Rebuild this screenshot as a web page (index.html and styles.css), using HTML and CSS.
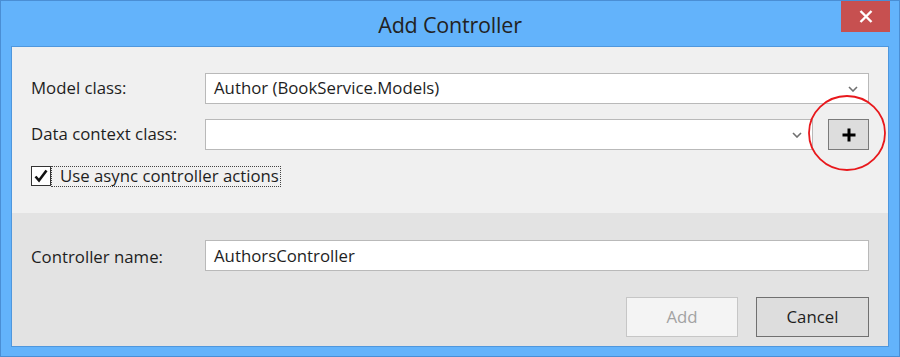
FILE: index.html
```html
<!DOCTYPE html>
<html>
<head>
<meta charset="utf-8">
<link rel="stylesheet" href="styles.css">
</head>
<body>
<div class="window">
  <div class="titlebar">
    <div></div>
    <div class="title">Add Controller</div>
    <div class="tb-right">
      <div class="close">
        <svg width="14" height="13" viewBox="0 0 14 13"><path d="M1.5 1 L12.5 12 M12.5 1 L1.5 12" stroke="#fff" stroke-width="2.4" fill="none"/></svg>
      </div>
    </div>
  </div>
  <div class="panel">
    <div class="upper">
      <div class="label">Model class:</div>
      <div class="combo">
        <span class="combo-text">Author (BookService.Models)</span>
        <svg class="chev" width="10" height="6" viewBox="0 0 10 6"><path d="M1 1 L5 5 L9 1" stroke="#707070" stroke-width="1.6" fill="none"/></svg>
      </div>
      <div class="label">Data context class:</div>
      <div class="row2">
        <div class="combo combo-grow">
          <span class="combo-text"></span>
          <svg class="chev" width="10" height="6" viewBox="0 0 10 6"><path d="M1 1 L5 5 L9 1" stroke="#707070" stroke-width="1.6" fill="none"/></svg>
        </div>
        <div class="plus-wrap">
          <div class="plus-btn">
            <svg width="16" height="16" viewBox="0 0 16 16"><path d="M8 1.5 V14.5 M1.5 8 H14.5" stroke="#000" stroke-width="3" fill="none"/></svg>
          </div>
          <svg class="circle" width="80" height="78" viewBox="0 0 80 78"><ellipse cx="40" cy="39" rx="38" ry="37" stroke="#e8181c" stroke-width="1.8" fill="none"/></svg>
        </div>
      </div>
      <div class="check-row">
        <div class="checkbox">
          <svg width="16" height="16" viewBox="0 0 16 16"><path d="M2.5 8.5 L6 12.5 L13.5 2.5" stroke="#111" stroke-width="2.6" fill="none"/></svg>
        </div>
        <div class="check-label">Use async controller actions</div>
      </div>
    </div>
    <div class="lower">
      <div class="name-row">
        <div class="label label-low">Controller name:</div>
        <div class="textbox">AuthorsController</div>
      </div>
      <div class="buttons">
        <div class="btn btn-disabled">Add</div>
        <div class="btn btn-default">Cancel</div>
      </div>
    </div>
  </div>
</div>
</body>
</html>
```
FILE: styles.css
```css
html, body {
  margin: 0;
  padding: 0;
}
body {
  width: 900px;
  height: 357px;
  font-family: "Open Sans", "Noto Sans", sans-serif;
  color: #1e1e1e;
}
.window {
  width: 900px;
  height: 357px;
  box-sizing: border-box;
  border: 1px solid #4a8ed4;
  background: #63b3fb;
  display: flex;
  flex-direction: column;
}
.titlebar {
  height: 45px;
  display: grid;
  grid-template-columns: 1fr auto 1fr;
}
.title {
  font-size: 21.5px;
  color: #222;
  line-height: 30px;
  padding-top: 9px;
  letter-spacing: -0.2px;
}
.tb-right {
  display: flex;
  justify-content: flex-end;
  align-items: flex-start;
  padding-right: 9px;
}
.close {
  width: 49px;
  height: 31px;
  background: #c75050;
  display: flex;
  align-items: center;
  justify-content: center;
}
.panel {
  flex: 1;
  margin: 0 10px 9px 10px;
  border: 1px solid #4f97dd;
  display: flex;
  flex-direction: column;
}
.upper {
  height: 166px;
  box-sizing: border-box;
  background: #f0f0f0;
  padding: 26px 19px 0 19px;
  display: grid;
  grid-template-columns: 174px 1fr;
  grid-template-rows: 31px 31px 21px;
  row-gap: 15px;
  align-items: center;
}
.label {
  font-size: 16.8px;
  line-height: 20px;
  color: #1e1e1e;
  padding-bottom: 2px;
}
.label-low {
  padding-bottom: 0;
  padding-top: 2px;
}
.combo {
  height: 31px;
  box-sizing: border-box;
  border: 1px solid #b9b9b9;
  background: #fff;
  display: flex;
  align-items: center;
  justify-content: space-between;
  padding: 0 10px 0 8px;
}
.combo-text {
  font-size: 16.8px;
  color: #1e1e1e;
  padding-bottom: 2px;
}
.chev {
  display: block;
}
.row2 {
  display: flex;
  align-items: center;
  gap: 15px;
  height: 31px;
}
.combo-grow {
  flex: 1;
}
.plus-wrap {
  position: relative;
  width: 41px;
  height: 31px;
}
.plus-btn {
  width: 41px;
  height: 31px;
  box-sizing: border-box;
  border: 1px solid #7a7a7a;
  background: #dddddd;
  display: flex;
  align-items: center;
  justify-content: center;
}
.circle {
  position: absolute;
  left: -21px;
  top: -25px;
}
.check-row {
  grid-column: 1 / 3;
  display: flex;
  align-items: center;
  height: 21px;
  margin-top: 1px;
}
.checkbox {
  width: 20px;
  height: 20px;
  box-sizing: border-box;
  border: 1px solid #333;
  background: #fff;
  display: flex;
  align-items: center;
  justify-content: center;
}
.check-label {
  height: 21px;
  box-sizing: border-box;
  border: 1px dotted #444;
  padding: 0 1px 0 8px;
  font-size: 16.8px;
  line-height: 17px;
  white-space: nowrap;
}
.lower {
  flex: 1;
  background: #e3e3e3;
  padding: 27px 19px 0 19px;
  display: flex;
  flex-direction: column;
}
.name-row {
  display: grid;
  grid-template-columns: 174px 1fr;
  align-items: center;
}
.textbox {
  height: 31px;
  box-sizing: border-box;
  border: 1px solid #b9b9b9;
  background: #fff;
  font-size: 16.8px;
  line-height: 29px;
  padding-left: 8px;
}
.buttons {
  display: flex;
  justify-content: flex-end;
  gap: 18px;
  margin-top: 26px;
}
.btn {
  width: 112px;
  height: 40px;
  box-sizing: border-box;
  display: flex;
  align-items: center;
  justify-content: center;
  font-size: 16.8px;
  padding-bottom: 2px;
}
.btn-disabled {
  background: #f4f4f4;
  border: 1px solid #c6c6c6;
  color: #a2a2a2;
}
.btn-default {
  background: #dddddd;
  border: 1px solid #707070;
  color: #1e1e1e;
  width: 113px;
}
```
